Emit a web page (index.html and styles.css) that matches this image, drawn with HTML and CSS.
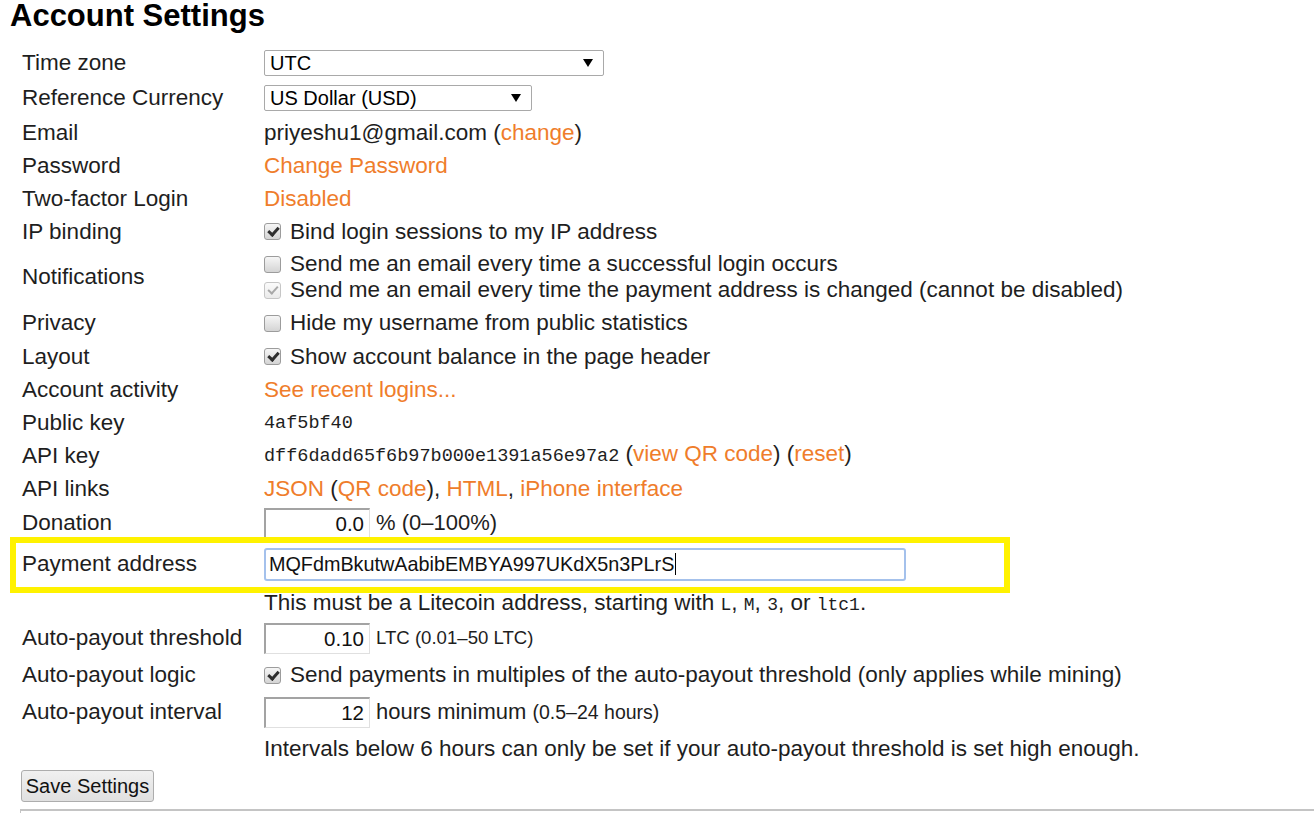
FILE: index.html
```html
<!DOCTYPE html>
<html>
<head>
<meta charset="utf-8">
<title>Account Settings</title>
<link rel="stylesheet" href="styles.css">
</head>
<body>
<div class="page">
  <h1 class="title">Account Settings</h1>
  <div class="form">
    <div class="row h34"><div class="label">Time zone</div><div class="value"><div class="select w339"><span>UTC</span><span class="arrow"></span></div></div></div>
    <div class="row h36"><div class="label">Reference Currency</div><div class="value"><div class="select w267"><span>US Dollar (USD)</span><span class="arrow"></span></div></div></div>
    <div class="row h33"><div class="label">Email</div><div class="value">priyeshu1@gmail.com (<a class="link">change</a>)</div></div>
    <div class="row h33"><div class="label">Password</div><div class="value"><a class="link">Change Password</a></div></div>
    <div class="row h33"><div class="label">Two-factor Login</div><div class="value"><a class="link">Disabled</a></div></div>
    <div class="row h33"><div class="label">IP binding</div><div class="value"><div class="check"><span class="box on"></span>Bind login sessions to my IP address</div></div></div>
    <div class="row h58"><div class="label">Notifications</div><div class="value">
      <div class="check"><span class="box"></span>Send me an email every time a successful login occurs</div>
      <div class="check"><span class="box on dis"></span>Send me an email every time the payment address is changed (cannot be disabled)</div>
    </div></div>
    <div class="row h34"><div class="label">Privacy</div><div class="value"><div class="check"><span class="box"></span>Hide my username from public statistics</div></div></div>
    <div class="row h33"><div class="label">Layout</div><div class="value"><div class="check"><span class="box on"></span>Show account balance in the page header</div></div></div>
    <div class="row h33"><div class="label">Account activity</div><div class="value"><a class="link">See recent logins...</a></div></div>
    <div class="row h33"><div class="label">Public key</div><div class="value"><span class="mono">4af5bf40</span></div></div>
    <div class="row h33"><div class="label">API key</div><div class="value"><span class="mono">dff6dadd65f6b97b000e1391a56e97a2</span> (<a class="link">view QR code</a>) (<a class="link">reset</a>)</div></div>
    <div class="row h33"><div class="label">API links</div><div class="value"><a class="link">JSON</a> (<a class="link">QR code</a>), <a class="link">HTML</a>, <a class="link">iPhone interface</a></div></div>
    <div class="row h36"><div class="label">Donation</div><div class="value inline"><div class="num">0.0</div><span class="unit">% (0–100%)</span></div></div>
    <div class="row h46"><div class="label">Payment address</div><div class="value"><div class="addr">MQFdmBkutwAabibEMBYA997UKdX5n3PLrS<span class="caret"></span></div></div></div>
    <div class="row h33"><div class="label"></div><div class="value">This must be a Litecoin address, starting with <span class="mono-s">L</span>, <span class="mono-s">M</span>, <span class="mono-s">3</span>, or <span class="mono-s">ltc1</span>.</div></div>
    <div class="row h36"><div class="label">Auto-payout threshold</div><div class="value inline"><div class="num">0.10</div><span class="unit small-ltc">LTC (0.01–50 LTC)</span></div></div>
    <div class="row h38"><div class="label">Auto-payout logic</div><div class="value"><div class="check"><span class="box on"></span>Send payments in multiples of the auto-payout threshold (only applies while mining)</div></div></div>
    <div class="row h36"><div class="label">Auto-payout interval</div><div class="value inline"><div class="num">12</div><span class="unit">hours minimum <span class="small">(0.5–24 hours)</span></span></div></div>
    <div class="row h38"><div class="label"></div><div class="value">Intervals below 6 hours can only be set if your auto-payout threshold is set high enough.</div></div>
  </div>
  <div class="actions"><button class="btn">Save Settings</button></div>
  <div class="next-box"></div>
  <div class="highlight"></div>
</div>
</body>
</html>
```
FILE: styles.css
```css
html, body {
  margin: 0;
  padding: 0;
  background: #ffffff;
}
body {
  font-family: "Liberation Sans", Arial, sans-serif;
  font-size: 22.5px;
  color: #1e1e1e;
  overflow: hidden;
}
.page {
  position: relative;
  width: 1314px;
  height: 813px;
}
.title {
  margin: 0;
  height: 46px;
  box-sizing: border-box;
  padding: 1px 0 0 10px;
  font-size: 31px;
  line-height: 29px;
  font-weight: bold;
  color: #000;
}
.form {
  padding-left: 22px;
}
.row {
  display: grid;
  grid-template-columns: 242px 1fr;
  align-items: center;
  line-height: 26px;
}
.h33 { height: 33px; }
.h34 { height: 34px; }
.h36 { height: 36px; }
.h38 { height: 38px; }
.h46 { height: 46px; }
.h58 { height: 58px; }
.label {
  white-space: nowrap;
}
.value {
  white-space: nowrap;
}
.value.inline {
  display: flex;
  align-items: center;
}
.link {
  color: #ef7d2b;
  text-decoration: none;
}
.mono {
  font-family: "Liberation Mono", "DejaVu Sans Mono", monospace;
  font-size: 18.5px;
}
.mono-s {
  font-family: "Liberation Mono", "DejaVu Sans Mono", monospace;
  font-size: 18px;
}
.select {
  box-sizing: border-box;
  height: 26px;
  border: 1px solid #a9a9a9;
  border-radius: 2px;
  background: #fff;
  display: flex;
  align-items: center;
  justify-content: space-between;
  padding: 0 10px 0 5px;
  font-size: 20px;
  line-height: 24px;
  color: #000;
}
.w339 { width: 340px; }
.w267 { width: 268px; }
.arrow {
  width: 0;
  height: 0;
  border-left: 5px solid transparent;
  border-right: 5px solid transparent;
  border-top: 8px solid #000;
}
.check {
  display: flex;
  align-items: center;
  height: 26px;
}
.box {
  box-sizing: border-box;
  width: 17px;
  height: 17px;
  margin-right: 9px;
  border: 1px solid #9c9c9c;
  border-radius: 3px;
  background: linear-gradient(#f6f6f6, #d4d4d4);
  position: relative;
  flex: none;
}
.box.on::after {
  content: "";
  position: absolute;
  left: 3px;
  top: 3px;
  width: 8px;
  height: 4px;
  border-left: 3px solid #2e2e2e;
  border-bottom: 3px solid #2e2e2e;
  transform: rotate(-48deg);
  transform-origin: center;
}
.box.dis {
  border-color: #c6c6c6;
  background: linear-gradient(#fbfbfb, #eaeaea);
}
.box.dis::after {
  border-color: #a8a8a8;
  border-width: 0 0 2px 2px;
}
.num {
  box-sizing: border-box;
  width: 106px;
  height: 31px;
  border-top: 2px solid #a3a3a3;
  border-left: 2px solid #a3a3a3;
  border-bottom: 1px solid #e0e0e0;
  border-right: 1px solid #e0e0e0;
  background: #fff;
  text-align: right;
  padding-right: 5px;
  font-size: 20.5px;
  line-height: 28px;
  color: #111;
  margin-right: 6px;
}
.unit {
  font-size: 22px;
}
.unit.small-ltc {
  font-size: 18.6px;
}
.small {
  font-size: 19.5px;
}
.addr {
  box-sizing: border-box;
  width: 642px;
  height: 33px;
  border: 2px solid #a4c1ec;
  border-radius: 3px;
  background: #fff;
  padding-left: 3px;
  font-size: 19.8px;
  line-height: 29px;
  color: #111;
  display: flex;
  align-items: center;
}
.caret {
  display: inline-block;
  width: 1px;
  height: 22px;
  background: #000;
  margin-left: 1px;
}
.actions {
  padding: 2px 0 0 21px;
}
.btn {
  box-sizing: border-box;
  width: 133px;
  height: 32px;
  border: 1px solid #adadad;
  border-radius: 3px;
  background: linear-gradient(#f0f0f0, #e0e0e0);
  font-family: "Liberation Sans", Arial, sans-serif;
  font-size: 20px;
  color: #111;
  padding: 0;
  margin: 0;
}
.next-box {
  margin: 7px 0 0 20px;
  height: 10px;
  border-top: 2px solid #c4c4c4;
  border-left: 1px solid #c4c4c4;
}
.highlight {
  position: absolute;
  left: 10px;
  top: 537px;
  width: 1000px;
  height: 56px;
  box-sizing: border-box;
  border: 6px solid #fff200;
  pointer-events: none;
}
```
